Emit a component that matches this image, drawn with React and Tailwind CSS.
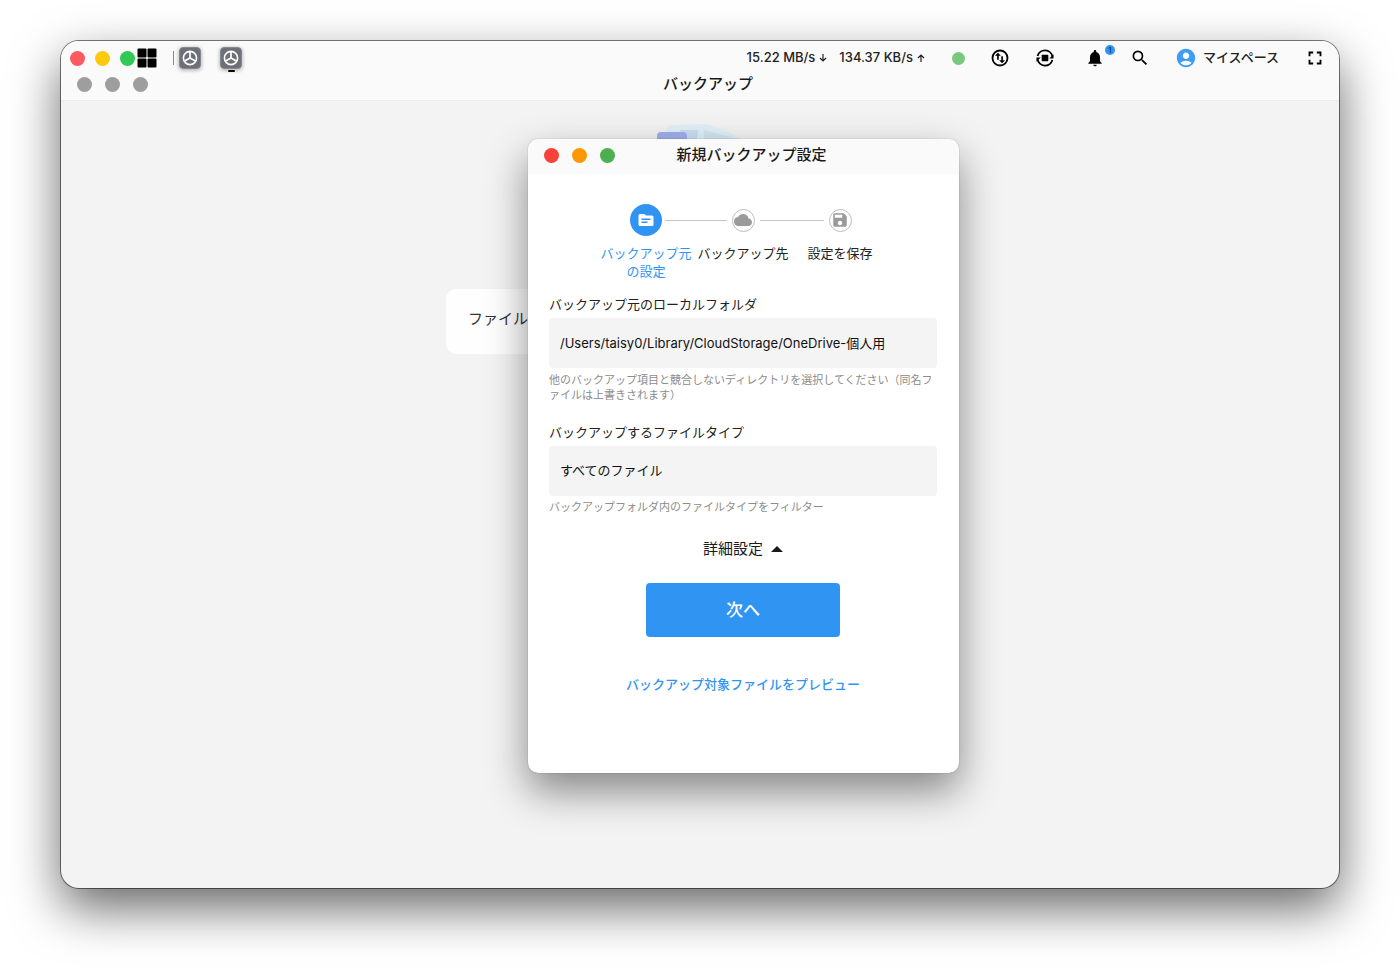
import { MdAccountCircle, MdCloud, MdFullscreen, MdNotifications, MdSave, MdSearch } from "react-icons/md";

function WheelIcon() {
  return (
    <svg viewBox="0 0 22 22" className="size-[22px]" aria-hidden="true">
      <rect x="0.5" y="0.5" width="21" height="21" rx="3.5" fill="#6d7076" stroke="#85888d" />
      <circle cx="11" cy="11" r="6.6" fill="none" stroke="#fff" strokeWidth="1.6" />
      <path d="M11 4.800V11L5.600 14M11 11l5.400 3" fill="none" stroke="#fff" strokeWidth="1.700" />
    </svg>
  );
}

function GridIcon() {
  return (
    <svg viewBox="0 0 20 20" className="size-5" aria-hidden="true">
      <rect x="0.5" y="0.5" width="9" height="9" rx="1" />
      <rect x="10.500" y="0.5" width="9" height="9" rx="1" />
      <rect x="0.5" y="10.500" width="9" height="9" rx="1" />
      <rect x="10.500" y="10.500" width="9" height="9" rx="1" />
    </svg>
  );
}

function SwapIcon() {
  return (
    <svg viewBox="0 0 24 24" className="size-5" aria-hidden="true">
      <circle cx="12" cy="12" r="9" fill="none" stroke="currentColor" strokeWidth="2.200" />
      <path d="M9.500 5.800L5.900 9.400h2.600v4.600h2V9.400h2.600zM14.500 18.200l3.600-3.600h-2.600V10h-2v4.600h-2.600z" fill="currentColor" />
    </svg>
  );
}

function SyncStopIcon() {
  return (
    <svg viewBox="0 0 24 24" className="size-5" aria-hidden="true">
      <path d="M3.100 9.500A9.200 9.200 0 0 1 21 10.500M20.900 14.500A9.200 9.200 0 0 1 3 13.500" fill="none" stroke="currentColor" strokeWidth="2.200" />
      <path d="M22.200 7.500v5h-5zM1.800 16.500v-5h5z" fill="currentColor" />
      <rect x="8" y="8" width="8" height="8" rx="1" fill="currentColor" />
    </svg>
  );
}

function FolderTextIcon() {
  return (
    <svg viewBox="0 0 24 24" className="size-[18px]" aria-hidden="true">
      <path fill="currentColor" fillRule="evenodd" d="M20 6h-8l-2-2H4a2 2 0 0 0-2 2v12c0 1.100.9 2 2 2h16a2 2 0 0 0 2-2V8a2 2 0 0 0-2-2zm-6 10H6v-2h8zm4-4H6v-2h12z" />
    </svg>
  );
}

function Illustration() {
  return (
    <svg viewBox="0 0 120 140" className="h-[140px] w-[120px]" aria-hidden="true">
      <path d="M26 9q1-5 6-5l34-1q16 4 36 15v100H24z" fill="#e0f1f7" />
      <path d="M40 9h18l-4 40H36z" fill="#cbdff3" />
      <path d="M64 9l34 9v40H62z" fill="#d2e6f1" />
      <rect x="17" y="11" width="30" height="60" rx="4" fill="#9fb0ec" />
    </svg>
  );
}

function TitleBar({ title, colors, className }) {
  return (
    <div className={`grid grid-cols-[1fr_auto_1fr] items-center pl-4 ${className}`}>
      <div className="flex gap-[13px]">
        {colors.map((color, i) => (
          <button key={i} type="button" aria-label={["閉じる", "最小化", "最大化"][i]} className={`size-[15px] rounded-full ${color}`} />
        ))}
      </div>
      <h2 className="text-[15px] leading-[18px] font-medium text-[#1a1a1a]">{title}</h2>
    </div>
  );
}

function Step({ icon, label, active, first, last }) {
  return (
    <li className="flex flex-col items-center" aria-current={active ? "step" : undefined}>
      <div className="flex h-8 w-full items-center">
        <span className={`h-px flex-1 ${first ? "" : "bg-[#c4c4c4]"}`} />
        <span
          className={
            active
              ? "mx-[3px] flex size-8 items-center justify-center rounded-full bg-[#3095f2] text-white"
              : "mx-[5px] flex size-[23px] items-center justify-center rounded-full border border-[#bdbdbd] text-[#9a9a9a]"
          }
        >
          {icon}
        </span>
        <span className={`h-px flex-1 ${last ? "" : "bg-[#c4c4c4]"}`} />
      </div>
      <span className={`mt-2 text-center text-[13px] leading-[18px] ${active ? "text-[#3095f2]" : "text-[#222]"}`}>{label}</span>
    </li>
  );
}

function TopBar() {
  return (
    <div className="flex h-[34px] items-center pr-[13px] pl-[9px] text-black">
      <div className="flex gap-[10px]">
        <button type="button" aria-label="閉じる" className="size-[15px] rounded-full bg-[#fd5a5f]" />
        <button type="button" aria-label="最小化" className="size-[15px] rounded-full bg-[#fdc90c]" />
        <button type="button" aria-label="最大化" className="size-[15px] rounded-full bg-[#2fc953]" />
      </div>
      <button type="button" aria-label="アプリ一覧" className="ml-[2px]"><GridIcon /></button>
      <span className="ml-4 h-[14px] w-px bg-[#8a8a8a]" />
      <button type="button" aria-label="設定" className="ml-[5px] rounded shadow-[0_1px_4px_rgba(0,0,0,0.35)]"><WheelIcon /></button>
      <button type="button" aria-label="バックアップ" className="relative ml-[19px] rounded shadow-[0_1px_4px_rgba(0,0,0,0.35)]">
        <WheelIcon />
        <span className="absolute top-[23px] left-2 h-[2px] w-[7px] rounded-full bg-black" />
      </button>
      <div className="ml-auto flex items-center gap-[25px]">
        <div className="mr-[2px] flex gap-3 text-[13px] font-medium text-[#222]">
          <span className="flex items-center gap-1">15.22 MB/s <Arrow down /></span>
          <span className="flex items-center gap-1">134.37 KB/s <Arrow /></span>
        </div>
        <span className="size-[13px] rounded-full bg-[#78c97c]" />
        <button type="button" aria-label="転送"><SwapIcon /></button>
        <button type="button" aria-label="同期"><SyncStopIcon /></button>
        <button type="button" aria-label="通知" className="relative ml-[5px]">
          <MdNotifications className="size-5" />
          <span className="absolute -top-[3px] left-5 flex size-[10px] items-center justify-center rounded-full bg-[#2f95f2] text-[8px] leading-none text-[#123]">1</span>
        </button>
        <button type="button" aria-label="検索"><MdSearch className="size-5" /></button>
        <button type="button" className="flex items-center gap-[6px] text-[13px] font-medium text-[#222]">
          <MdAccountCircle className="size-[22px] text-[#3f9ef3]" />
          マイスペース
        </button>
        <button type="button" aria-label="全画面"><MdFullscreen className="size-[22px]" /></button>
      </div>
    </div>
  );
}

function Arrow({ down }) {
  return (
    <svg viewBox="0 0 8 8" className="size-2" fill="none" stroke="currentColor" strokeWidth="1.200" aria-hidden="true">
      <path d={down ? "M4 0v7M1 4l3 3 3-3" : "M4 8V1M1 4l3-3 3 3"} />
    </svg>
  );
}

function BackupDialog() {
  return (
    <section
      role="dialog"
      aria-label="新規バックアップ設定"
      className="absolute top-[98px] left-[calc(50%-172px)] w-[431px] overflow-hidden rounded-[10px] bg-white shadow-[0_0_1px_rgba(0,0,0,0.5),0_18px_40px_rgba(0,0,0,0.45)]"
    >
      <TitleBar title="新規バックアップ設定" colors={["bg-[#f6423a]", "bg-[#fd9802]", "bg-[#4caf50]"]} className="h-[35px] bg-[#fafafa] pb-[3px]" />
      <form className="flex flex-col pt-[30px] pr-[22px] pb-[79px] pl-[21px]" onSubmit={(e) => e.preventDefault()}>
        <ol className="mx-auto grid w-[291px] grid-cols-3">
          <Step first active icon={<FolderTextIcon />} label="バックアップ元の設定" />
          <Step icon={<MdCloud className="size-[18px]" />} label="バックアップ先" />
          <Step last icon={<MdSave className="size-[18px]" />} label="設定を保存" />
        </ol>

        <label htmlFor="source" className="mt-[14px] text-[13px] leading-5 text-[#222]">バックアップ元のローカルフォルダ</label>
        <input
          id="source"
          readOnly
          value="/Users/taisy0/Library/CloudStorage/OneDrive-個人用"
          className="mt-1 h-[50px] rounded-[4px] bg-[#f4f4f4] px-[11px] pb-[2px] text-[13px] text-[#111] outline-none"
        />
        <p className="mt-[5px] text-[11px] leading-[15px] text-[#8c8c8c] [line-break:loose]">
          他のバックアップ項目と競合しないディレクトリを選択してください（同名ファイルは上書きされます）
        </p>

        <label htmlFor="types" className="mt-[19px] text-[13px] leading-5 text-[#222]">バックアップするファイルタイプ</label>
        <select id="types" className="mt-1 h-[50px] appearance-none rounded-[4px] bg-[#f4f4f4] px-[11px] text-[13px] text-[#111] outline-none">
          <option>すべてのファイル</option>
        </select>
        <p className="mt-1 text-[11px] leading-[15px] text-[#8c8c8c]">バックアップフォルダ内のファイルタイプをフィルター</p>

        <button type="button" className="mx-auto mt-[22px] flex h-6 items-center gap-2 text-[15px] text-[#1a1a1a]">
          詳細設定
          <svg viewBox="0 0 12 6" className="h-[6px] w-3" aria-hidden="true"><path d="M0 6l6-6 6 6z" fill="currentColor" /></svg>
        </button>
        <button type="submit" className="mx-auto mt-[22px] h-[54px] w-[194px] rounded-[4px] bg-[#3095f2] pt-[2px] text-[17px] font-medium text-white">次へ</button>
        <a href="#preview" className="mx-auto mt-[37px] text-[13px] leading-5 font-medium text-[#3095f2]">バックアップ対象ファイルをプレビュー</a>
      </form>
    </section>
  );
}

export default function App() {
  return (
    <div lang="ja" className="flex min-h-screen bg-white px-[61px] pt-[41px] pb-20 font-['Inter','Noto_Sans_CJK_JP',sans-serif]">
      <div className="relative flex flex-1 flex-col rounded-[18px] bg-[#f3f3f3] shadow-[0_0_0_1px_rgba(0,0,0,0.5),0_20px_50px_rgba(0,0,0,0.6)]">
        <header className="rounded-t-[18px] border-b border-[#ececec] bg-[#fafafa]">
          <TopBar />
          <TitleBar title="バックアップ" colors={["bg-[#9e9e9e]", "bg-[#9e9e9e]", "bg-[#9e9e9e]"]} className="mb-[7px] h-[18px]" />
        </header>
        <main className="flex flex-1 flex-col items-center pt-5">
          <Illustration />
          <div className="mt-7 flex h-[65px] w-[508px] max-w-full items-center rounded-[10px] bg-white/90 px-[22px] pb-1 text-[15px] text-[#333]">ファイル</div>
        </main>
        <BackupDialog />
      </div>
    </div>
  );
}
